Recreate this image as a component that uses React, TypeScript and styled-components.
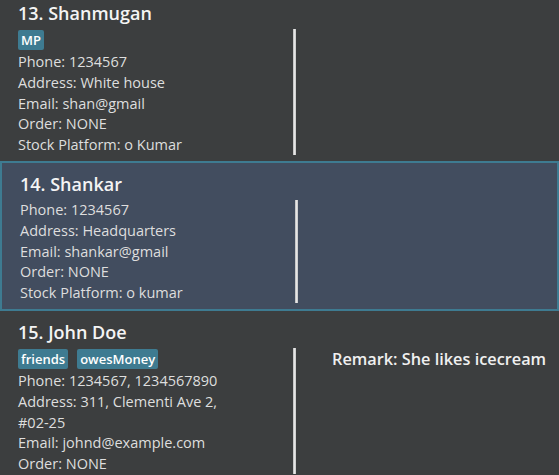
import React from "react";
import styled, { createGlobalStyle } from "styled-components";

const Global = createGlobalStyle`
  html, body { margin: 0; padding: 0; background: #3c3e3f; overflow: hidden; }
  body { font-family: "Open Sans", "Noto Sans", sans-serif; }
`;

const List = styled.div`
  display: flex;
  flex-direction: column;
  width: 559px;
  margin-top: -8px;
`;

const Card = styled.div<{ $selected?: boolean }>`
  display: flex;
  flex-direction: column;
  padding: 9px 0 5px 18px;
  background: ${(p) => (p.$selected ? "#424d5f" : "#3c3e3f")};
  border: ${(p) => (p.$selected ? "2px solid #3e7b91" : "none")};
`;

const Name = styled.div`
  font-family: "Open Sans", sans-serif;
  font-weight: 600;
  font-size: 18px;
  line-height: 25px;
  color: #f4f4f4;
  margin-bottom: 3px;
`;

const Body = styled.div`
  display: flex;
  align-items: stretch;
`;

const Details = styled.div`
  width: 275px;
  display: flex;
  flex-direction: column;
`;

const Divider = styled.div`
  width: 3px;
  margin-bottom: 1px;
  background: linear-gradient(to right, #b8b8b8, #e6e6e6, #c4c4c4);
`;

const Remark = styled.div`
  padding: 1px 0 0 36px;
  font-family: "Open Sans", sans-serif;
  font-weight: 600;
  font-size: 16.3px;
  line-height: 21px;
  color: #f0f0f0;
`;

const Tags = styled.div`
  display: flex;
  gap: 9px;
  height: 22px;
  align-items: flex-start;
  padding-top: 1px;
`;

const Tag = styled.span`
  display: inline-block;
  background: #3e7b91;
  color: #ffffff;
  font-size: 13px;
  font-weight: 600;
  line-height: 20px;
  padding: 0 3px;
  border-radius: 2px;
`;

const Line = styled.div`
  font-size: 14.5px;
  line-height: 20.8px;
  color: #dedede;
  white-space: pre-wrap;
`;

type Person = {
  name: string;
  tags: string[];
  lines: string[];
  remark?: string;
  selected?: boolean;
};

const people: Person[] = [
  {
    name: "13. Shanmugan",
    tags: ["MP"],
    lines: [
      "Phone: 1234567",
      "Address: White house",
      "Email: shan@gmail",
      "Order: NONE",
      "Stock Platform: o Kumar",
    ],
  },
  {
    name: "14. Shankar",
    tags: [],
    selected: true,
    lines: [
      "Phone: 1234567",
      "Address: Headquarters",
      "Email: shankar@gmail",
      "Order: NONE",
      "Stock Platform: o kumar",
    ],
  },
  {
    name: "15. John Doe",
    tags: ["friends", "owesMoney"],
    remark: "Remark: She likes icecream",
    lines: [
      "Phone: 1234567, 1234567890",
      "Address: 311, Clementi Ave 2,",
      "#02-25",
      "Email: johnd@example.com",
      "Order: NONE",
    ],
  },
];

export default function App() {
  return (
    <>
      <Global />
      <List>
        {people.map((p) => (
          <Card key={p.name} $selected={p.selected}>
            <Name>{p.name}</Name>
            <Body>
              <Details>
                {p.tags.length > 0 && (
                  <Tags>
                    {p.tags.map((t) => (
                      <Tag key={t}>{t}</Tag>
                    ))}
                  </Tags>
                )}
                {p.lines.map((l, i) => (
                  <Line key={i}>{l}</Line>
                ))}
              </Details>
              <Divider />
              <Remark>{p.remark ?? ""}</Remark>
            </Body>
          </Card>
        ))}
      </List>
    </>
  );
}
